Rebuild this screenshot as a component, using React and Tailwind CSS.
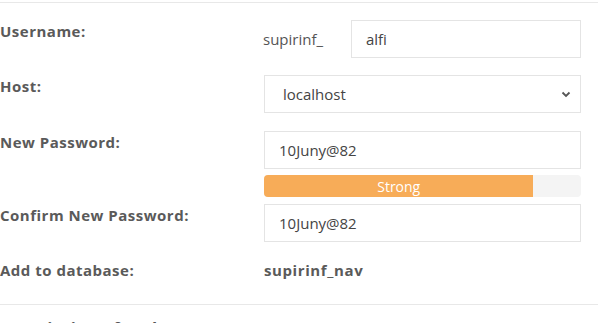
import React from 'react';

const font = { fontFamily: '"Open Sans", "Liberation Sans", sans-serif' };

function Field({ label, children, className = '' }) {
  return (
    <div className={`flex items-start ${className}`}>
      <div className="w-[264px] shrink-0 pt-[1px] text-[15px] leading-5 font-bold tracking-[0.5px] text-[#5a5a5a]">
        {label}
      </div>
      <div className="flex-1">{children}</div>
    </div>
  );
}

function TextBox({ value, className = '' }) {
  return (
    <div
      className={`h-[38px] flex items-center border border-[#e4e4e4] bg-white px-[14px] text-[15px] text-[#444] ${className}`}
    >
      {value}
    </div>
  );
}

export default function App() {
  return (
    <div className="w-[598px] h-[323px] overflow-hidden bg-white pr-[17px]" style={font}>
      <div className="mt-[2px] border-t border-[#e8e8e8] -mr-[17px]" />

      <Field label="Username:" className="mt-[17px]">
        <div className="flex items-center">
          <span className="w-[88px] shrink-0 text-[15px] text-[#555] -ml-px">supirinf_</span>
          <TextBox value="alfi" className="flex-1" />
        </div>
      </Field>

      <Field label="Host:" className="mt-[17px]">
        <div className="h-[38px] flex items-center justify-between border border-[#e4e4e4] bg-white pl-[18px] pr-[9px] text-[15px] text-[#444]">
          <span>localhost</span>
          <svg width="10" height="7" viewBox="0 0 10 7" fill="none">
            <path d="M1.5 1.5 L5 5 L8.5 1.5" stroke="#555" strokeWidth="1.8" />
          </svg>
        </div>
      </Field>

      <Field label="New Password:" className="mt-[18px]">
        <TextBox value="10Juny@82" />
        <div className="mt-[6px] h-[22px] rounded-[4px] bg-[#f4f4f4] overflow-hidden flex">
          <div className="w-[85%] h-full bg-[#f7ac58] flex items-center justify-center text-[14px] text-white">
            Strong
          </div>
        </div>
      </Field>

      <Field label="Confirm New Password:" className="mt-[7px]">
        <TextBox value="10Juny@82" />
      </Field>

      <Field label="Add to database:" className="mt-[17px]">
        <div className="pt-[1px] text-[15px] leading-5 font-bold tracking-[0.6px] text-[#5a5a5a]">supirinf_nav</div>
      </Field>

      <div className="mt-[24px] border-t border-[#e8e8e8] -mr-[17px]" />
      <div className="mt-[12px] text-[17px] font-bold tracking-[0.5px] text-[#555]">Permissions for the user</div>
    </div>
  );
}
